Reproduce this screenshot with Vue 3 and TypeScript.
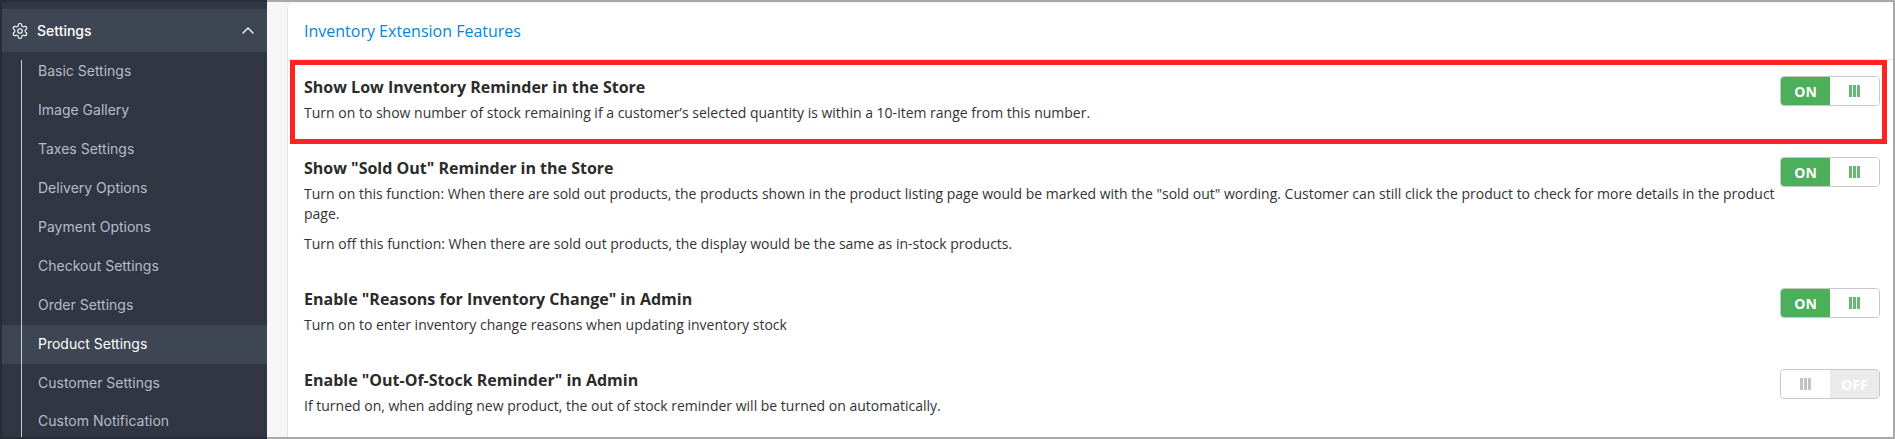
<template>
  <div class="page">
    <aside class="sidebar">
      <div class="nav-head">
        <svg class="gear" viewBox="0 0 24 24" fill="none" stroke="currentColor" stroke-width="1.5" stroke-linecap="round" stroke-linejoin="round">
          <path d="M12.22 2h-.44a2 2 0 0 0-2 2v.18a2 2 0 0 1-1 1.73l-.43.25a2 2 0 0 1-2 0l-.15-.08a2 2 0 0 0-2.73.73l-.22.38a2 2 0 0 0 .73 2.73l.15.1a2 2 0 0 1 1 1.72v.51a2 2 0 0 1-1 1.74l-.15.09a2 2 0 0 0-.73 2.73l.22.38a2 2 0 0 0 2.73.73l.15-.08a2 2 0 0 1 2 0l.43.25a2 2 0 0 1 1 1.73V20a2 2 0 0 0 2 2h.44a2 2 0 0 0 2-2v-.18a2 2 0 0 1 1-1.73l.43-.25a2 2 0 0 1 2 0l.15.08a2 2 0 0 0 2.73-.73l.22-.39a2 2 0 0 0-.73-2.73l-.15-.08a2 2 0 0 1-1-1.74v-.5a2 2 0 0 1 1-1.74l.15-.09a2 2 0 0 0 .73-2.73l-.22-.38a2 2 0 0 0-2.73-.73l-.15.08a2 2 0 0 1-2 0l-.43-.25a2 2 0 0 1-1-1.73V4a2 2 0 0 0-2-2z" />
          <circle cx="12" cy="12" r="3" />
        </svg>
        <span class="nav-title">Settings</span>
        <svg class="chevron" viewBox="0 0 12 7" fill="none" stroke="currentColor" stroke-width="1.3" stroke-linecap="round" stroke-linejoin="round">
          <path d="M1 6l5-5 5 5" />
        </svg>
      </div>
      <ul class="nav-list">
        <li v-for="item in navItems" :key="item" class="nav-item" :class="{ active: item === activeItem }">
          {{ item }}
        </li>
      </ul>
    </aside>

    <main class="main">
      <section class="card">
        <header class="card-header">Inventory Extension Features</header>
        <div class="highlight"></div>
        <div v-for="row in rows" :key="row.title" class="row">
          <div class="row-text">
            <h4>{{ row.title }}</h4>
            <p v-for="line in row.lines" :key="line">{{ line }}</p>
          </div>
          <div class="toggle" :class="row.on ? 'is-on' : 'is-off'">
            <template v-if="row.on">
              <span class="toggle-label">ON</span>
              <span class="toggle-handle"><i></i><i></i><i></i></span>
            </template>
            <template v-else>
              <span class="toggle-handle"><i></i><i></i><i></i></span>
              <span class="toggle-label">OFF</span>
            </template>
          </div>
        </div>
      </section>
    </main>
  </div>
</template>

<script setup lang="ts">
interface SettingRow {
  title: string;
  lines: string[];
  on: boolean;
}

const activeItem = "Product Settings";

const navItems: string[] = [
  "Basic Settings",
  "Image Gallery",
  "Taxes Settings",
  "Delivery Options",
  "Payment Options",
  "Checkout Settings",
  "Order Settings",
  "Product Settings",
  "Customer Settings",
  "Custom Notification",
];

const rows: SettingRow[] = [
  {
    title: "Show Low Inventory Reminder in the Store",
    lines: [
      "Turn on to show number of stock remaining if a customer’s selected quantity is within a 10-item range from this number.",
    ],
    on: true,
  },
  {
    title: 'Show "Sold Out" Reminder in the Store',
    lines: [
      'Turn on this function: When there are sold out products, the products shown in the product listing page would be marked with the "sold out" wording. Customer can still click the product to check for more details in the product page.',
      "Turn off this function: When there are sold out products, the display would be the same as in-stock products.",
    ],
    on: true,
  },
  {
    title: 'Enable "Reasons for Inventory Change" in Admin',
    lines: ["Turn on to enter inventory change reasons when updating inventory stock"],
    on: true,
  },
  {
    title: 'Enable "Out-Of-Stock Reminder" in Admin',
    lines: ["If turned on, when adding new product, the out of stock reminder will be turned on automatically."],
    on: false,
  },
];
</script>

<style>
html,
body {
  margin: 0;
  overflow: hidden;
}
</style>

<style scoped>
.page {
  display: flex;
  width: 1895px;
  height: 439px;
  overflow: hidden;
}

.sidebar {
  flex: 0 0 267px;
  box-sizing: border-box;
  padding-top: 7px;
  border-top: 2px solid #272c36;
  border-left: 2px solid #272c36;
  border-bottom: 2px solid #272c36;
  background: #303642;
  font-family: Inter, "Liberation Sans", sans-serif;
  overflow: hidden;
}

.nav-head {
  display: flex;
  align-items: center;
  height: 43px;
  padding: 0 13px 0 9px;
  background: #3f4653;
  color: #fff;
}

.gear {
  width: 18px;
  height: 18px;
}

.nav-title {
  flex: 1;
  margin-left: 8px;
  font-size: 14px;
  font-weight: 500;
}

.chevron {
  width: 12px;
  height: 7px;
}

.nav-list {
  position: relative;
  margin: 0;
  padding: 0.4px 0 0;
  list-style: none;
}

.nav-list::before {
  content: "";
  position: absolute;
  left: 19px;
  top: 8px;
  bottom: 0;
  width: 1px;
  background: #c6cbd6;
}

.nav-item {
  height: 38.9px;
  padding-left: 36px;
  line-height: 38.9px;
  font-size: 14px;
  color: #b6bccb;
}

.nav-item.active {
  background: #3f4653;
  color: #fff;
}

.main {
  flex: 1;
  box-sizing: border-box;
  min-width: 0;
  padding: 1px 0 0 20px;
  border-top: 2px solid #a8a8a8;
  border-right: 2px solid #a8a8a8;
  border-bottom: 2px solid #a8a8a8;
  background: #f6f6f6;
  font-family: "Open Sans", "Liberation Sans", sans-serif;
}

.card {
  position: relative;
  height: 100%;
  box-sizing: border-box;
  border-left: 1px solid #e4e4e4;
  border-top-left-radius: 6px;
  background: #fff;
}

.card-header {
  display: flex;
  align-items: center;
  box-sizing: border-box;
  height: 57px;
  padding-left: 16px;
  border-bottom: 1px solid #e6e6e6;
  font-size: 16px;
  color: #0a84d6;
}

.highlight {
  position: absolute;
  left: 2px;
  top: 57px;
  width: 1597px;
  height: 84px;
  box-sizing: border-box;
  border: 5px solid #ff2323;
}

.row {
  display: flex;
  justify-content: space-between;
  padding: 16px 13px 18px 16px;
}

.row-text {
  width: 1476px;
  color: #333;
  font-size: 14px;
  line-height: 20px;
}

.row-text h4 {
  margin: 0 0 5px;
  font-size: 16px;
  line-height: 22px;
  font-weight: 700;
  color: #2b2b2b;
}

.row-text p {
  margin: 0;
}

.row-text p + p {
  margin-top: 10px;
}

.toggle {
  display: flex;
  flex: 0 0 100px;
  box-sizing: border-box;
  height: 30px;
  border: 1px solid #c8c8c8;
  border-radius: 4px;
  overflow: hidden;
  font-size: 14px;
  font-weight: 700;
}

.toggle-label,
.toggle-handle {
  display: flex;
  flex: 0 0 49px;
  align-items: center;
  justify-content: center;
}

.is-on .toggle-label {
  background: #4caf5a;
  color: #fff;
}

.is-off .toggle-label {
  flex: 1;
  background: #ebebeb;
  color: #fff;
}

.toggle-handle {
  flex: 1;
  gap: 1px;
  background: #fff;
  color: #63bb70;
}

.is-off .toggle-handle {
  flex: 0 0 49px;
  color: #c2c2c2;
}

.toggle-handle i {
  width: 3px;
  height: 12px;
  background: currentColor;
}
</style>
